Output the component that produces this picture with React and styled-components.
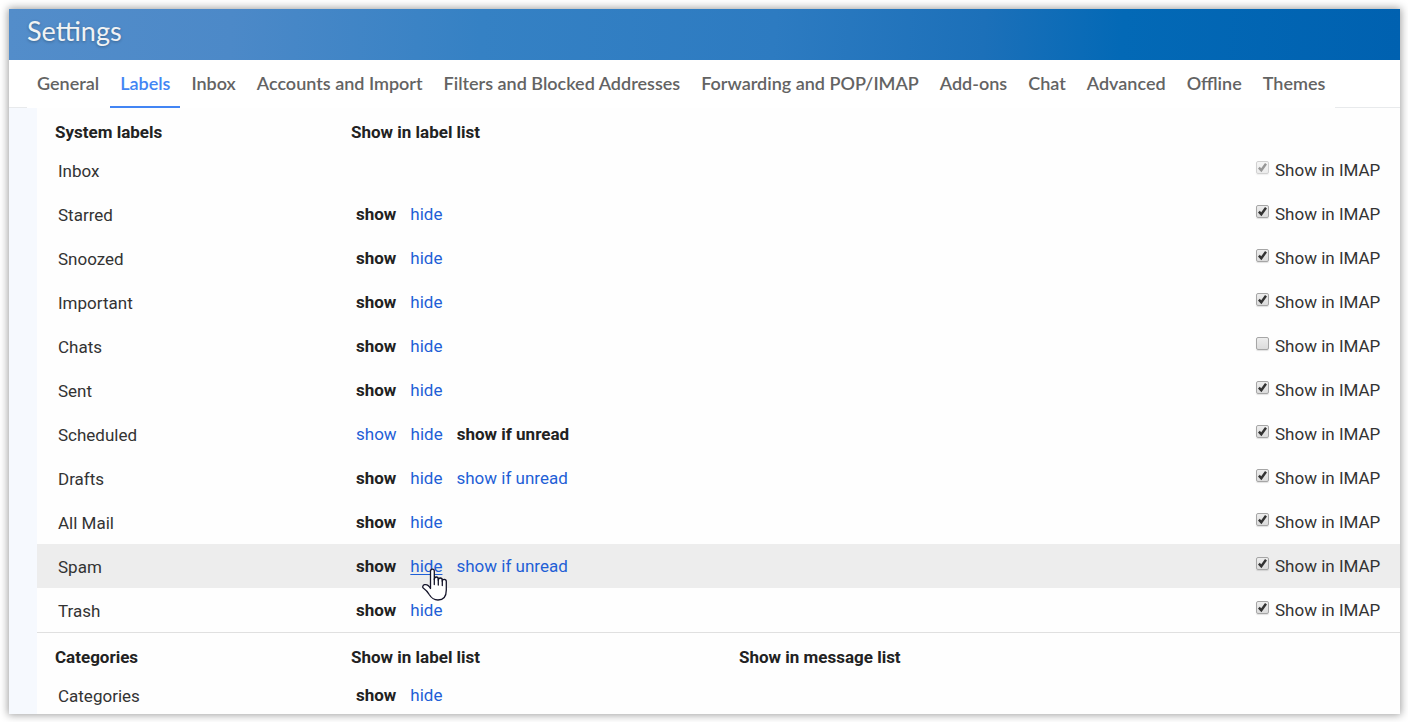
/* --- Packages and Components --- */
import React from 'react';
import styled, { createGlobalStyle } from 'styled-components';

/* --- Data --- */
const TABS = [
  'General',
  'Labels',
  'Inbox',
  'Accounts and Import',
  'Filters and Blocked Addresses',
  'Forwarding and POP/IMAP',
  'Add-ons',
  'Chat',
  'Advanced',
  'Offline',
  'Themes'
];

const BASIC = ['show', 'hide'];
const WITH_UNREAD = ['show', 'hide', 'show if unread'];

const SYSTEM_LABELS = [
  { name: 'Inbox', options: [], imap: true, locked: true },
  { name: 'Starred', options: BASIC, current: 'show', imap: true },
  { name: 'Snoozed', options: BASIC, current: 'show', imap: true },
  { name: 'Important', options: BASIC, current: 'show', imap: true },
  { name: 'Chats', options: BASIC, current: 'show', imap: false },
  { name: 'Sent', options: BASIC, current: 'show', imap: true },
  {
    name: 'Scheduled',
    options: WITH_UNREAD,
    current: 'show if unread',
    imap: true
  },
  { name: 'Drafts', options: WITH_UNREAD, current: 'show', imap: true },
  { name: 'All Mail', options: BASIC, current: 'show', imap: true },
  {
    name: 'Spam',
    options: WITH_UNREAD,
    current: 'show',
    imap: true,
    pointed: 'hide'
  },
  { name: 'Trash', options: BASIC, current: 'show', imap: true }
];

/* --- Styles --- */
const GlobalStyle = createGlobalStyle`
  * {
    box-sizing: border-box;
  }

  body {
    margin: 0;
    background: #fff;
    color: #222;
    font-family: Roboto, 'Liberation Sans', sans-serif;
    font-size: 17px;
    line-height: 20px;
  }
`;

const Page = styled.div`
  display: flex;
  min-height: 100vh;
  padding: 9px 8px 8px 9px;
`;

const Window = styled.main`
  display: flex;
  flex: 1;
  flex-direction: column;
  min-width: 0;
  background: #fff;
  box-shadow: 0 0 8px 1px rgba(0, 0, 0, 0.38);
`;

const Header = styled.header`
  padding: 8px 18px 15px;
  background: linear-gradient(
    93deg,
    #538dca 0%,
    #4c89c8 16%,
    #3581c4 34%,
    #2d7bc1 55%,
    #1c70b9 70%,
    #0369b6 80%,
    #0061b0 100%
  );

  & h1 {
    margin: 0;
    color: #f1f3f4;
    font-family: Lato, 'Liberation Sans', sans-serif;
    font-size: 27px;
    font-weight: 400;
    line-height: 28px;
    text-shadow: 0 1px 3px rgba(0, 0, 0, 0.3);
  }
`;

const TabBar = styled.nav`
  padding: 0 18px;
  box-shadow: inset 0 -1px #e8eaec;
`;

const TabList = styled.ul`
  display: inline-flex;
  gap: 1px;
  vertical-align: top;
  margin: 0;
  padding: 0;
  list-style: none;
  background: #fff;
`;

const Tab = styled.a`
  display: block;
  height: 48px;
  padding: 13px 10px 0;
  border-bottom: 2px solid ${props => (props.$active ? '#4285f4' : '#fff')};

  color: ${props => (props.$active ? '#4285f4' : '#636363')};
  font-family: Lato, 'Liberation Sans', sans-serif;
  font-size: 18px;
  font-weight: 600;
  white-space: nowrap;
  text-decoration: none;
`;

const Body = styled.div`
  flex: 1;
  padding-left: 28px;
  background: linear-gradient(90deg, #f6f9fe 28px, #fefefe 28px);
`;

const LabelTable = styled.table`
  width: 100%;
  table-layout: fixed;
  border-collapse: separate;
  border-spacing: 0;

  & col.name {
    width: 314px;
  }

  & col.list {
    width: 388px;
  }

  & col.imap {
    width: 149px;
  }
`;

const HeadCell = styled.th`
  height: ${props => (props.$divided ? '44px' : '40px')};
  padding: ${props => (props.$divided ? '5px 0 0' : '8px 0 0')};
  border-top: ${props => (props.$divided ? '1px solid #e0e0e0' : 'none')};
  font-weight: 700;
  text-align: left;

  &:first-child {
    padding-left: 18px;
  }
`;

const Row = styled.tr`
  height: ${props => (props.$short ? '38px' : '44px')};
  background: ${props => (props.$highlight ? '#ededed' : 'transparent')};
`;

const Cell = styled.td`
  padding: 0 0 0 5px;
`;

const NameCell = styled.th`
  padding: 2px 0 0 21px;
  color: #333;
  font-weight: 400;
  text-align: left;
`;

const Options = styled.div`
  display: flex;
  gap: 14px;
  white-space: nowrap;
`;

const Current = styled.span`
  font-weight: 700;
`;

const Option = styled.a`
  position: relative;
  color: #1f5fd6;
  text-decoration: ${props => (props.$pointed ? 'underline' : 'none')};
  text-underline-offset: 2px;
`;

const Hand = styled.svg`
  position: absolute;
  top: 12px;
  left: 12px;
  width: 26px;
  height: 34px;
`;

const ImapLabel = styled.label`
  display: flex;
  align-items: center;
  gap: 6px;
  color: #333;
  white-space: nowrap;
`;

const CheckHolder = styled.span`
  display: grid;
  padding-bottom: 6px;
  opacity: ${props => (props.$locked ? 0.5 : 1)};

  & input,
  & svg {
    grid-area: 1 / 1;
    width: 13px;
    height: 13px;
    margin: 0;
  }

  & svg {
    z-index: 1;
    pointer-events: none;
  }

  & input {
    appearance: none;
    border: 1px solid #a6a6a6;
    border-radius: 2px;
    background: linear-gradient(#ededed, #dcdcdc);
    box-shadow: 0 1px 1px rgba(0, 0, 0, 0.12);
  }
`;

/* --- Components --- */
const HandPointer = () => (
  <Hand viewBox="0 0 26 34" aria-hidden="true">
    <path
      d="M8.5 20.5V3.2C8.5 1.9 9.3 1.2 10.4 1.2S12.3 1.9 12.3 3.2V11.5C12.3 9.8 13.2 9 14.3 9S16.3 9.8 16.3 11.2V12.3C16.3 10.7 17.2 10 18.3 10S20.3 10.8 20.3 12.2V13.3C20.3 11.9 21.2 11.3 22.3 11.3S24.3 12.2 24.3 13.5V22C24.3 28 21.5 32 16 32C11.5 32 9.3 30 7.2 26.5C5.8 24 3.5 21.7 1.5 20.3C.2 19.3 .6 17.2 2.5 16.7C5 16.1 7.2 18 8.5 20.5Z"
      fill="#fff"
      stroke="#14142a"
      strokeWidth="1.3"
      strokeLinejoin="round"
    />
    <path
      d="M12.3 11V16.5M16.3 11.5V17M20.3 12.5V17.5"
      fill="none"
      stroke="#14142a"
      strokeWidth="1.3"
      strokeLinecap="round"
    />
  </Hand>
);

const ImapCheck = ({ label }) => {
  const [checked, setChecked] = React.useState(label.imap);

  return (
    <ImapLabel>
      <CheckHolder $locked={label.locked}>
        <input
          type="checkbox"
          checked={checked}
          disabled={label.locked}
          onChange={() => setChecked(!checked)}
        />
        {checked && (
          <svg viewBox="0 0 13 13" aria-hidden="true">
            <path
              d="M2.9 6.6L5.3 9.3L10 2.8"
              fill="none"
              stroke="#333"
              strokeWidth="2.4"
            />
          </svg>
        )}
      </CheckHolder>
      Show in IMAP
    </ImapLabel>
  );
};

const LabelOptions = ({ label }) => (
  <Options>
    {label.options.map(option =>
      option === label.current ? (
        <Current key={option}>{option}</Current>
      ) : (
        <Option key={option} href="#labels" $pointed={option === label.pointed}>
          {option}
          {option === label.pointed && <HandPointer />}
        </Option>
      )
    )}
  </Options>
);

const Columns = () => (
  <colgroup>
    <col className="name" />
    <col className="list" />
    <col />
    <col className="imap" />
  </colgroup>
);

const LabelRow = ({ label, short }) => (
  <Row $highlight={Boolean(label.pointed)} $short={short}>
    <NameCell scope="row">{label.name}</NameCell>
    <Cell>
      <LabelOptions label={label} />
    </Cell>
    <Cell />
    <Cell>{label.imap !== undefined && <ImapCheck label={label} />}</Cell>
  </Row>
);

const App = () => (
  <Page>
    <GlobalStyle />
    <Window>
      <Header>
        <h1>Settings</h1>
      </Header>
      <TabBar>
        <TabList>
          {TABS.map(tab => (
            <li key={tab}>
              <Tab href="#settings" $active={tab === 'Labels'}>
                {tab}
              </Tab>
            </li>
          ))}
        </TabList>
      </TabBar>
      <Body>
        <LabelTable>
          <Columns />
          <thead>
            <tr>
              <HeadCell>System labels</HeadCell>
              <HeadCell colSpan={3}>Show in label list</HeadCell>
            </tr>
          </thead>
          <tbody>
            {SYSTEM_LABELS.map(label => (
              <LabelRow key={label.name} label={label} />
            ))}
          </tbody>
        </LabelTable>
        <LabelTable>
          <Columns />
          <thead>
            <tr>
              <HeadCell $divided>Categories</HeadCell>
              <HeadCell $divided>Show in label list</HeadCell>
              <HeadCell $divided colSpan={2}>
                Show in message list
              </HeadCell>
            </tr>
          </thead>
          <tbody>
            <LabelRow
              short
              label={{ name: 'Categories', options: BASIC, current: 'show' }}
            />
          </tbody>
        </LabelTable>
      </Body>
    </Window>
  </Page>
);

export default App;
